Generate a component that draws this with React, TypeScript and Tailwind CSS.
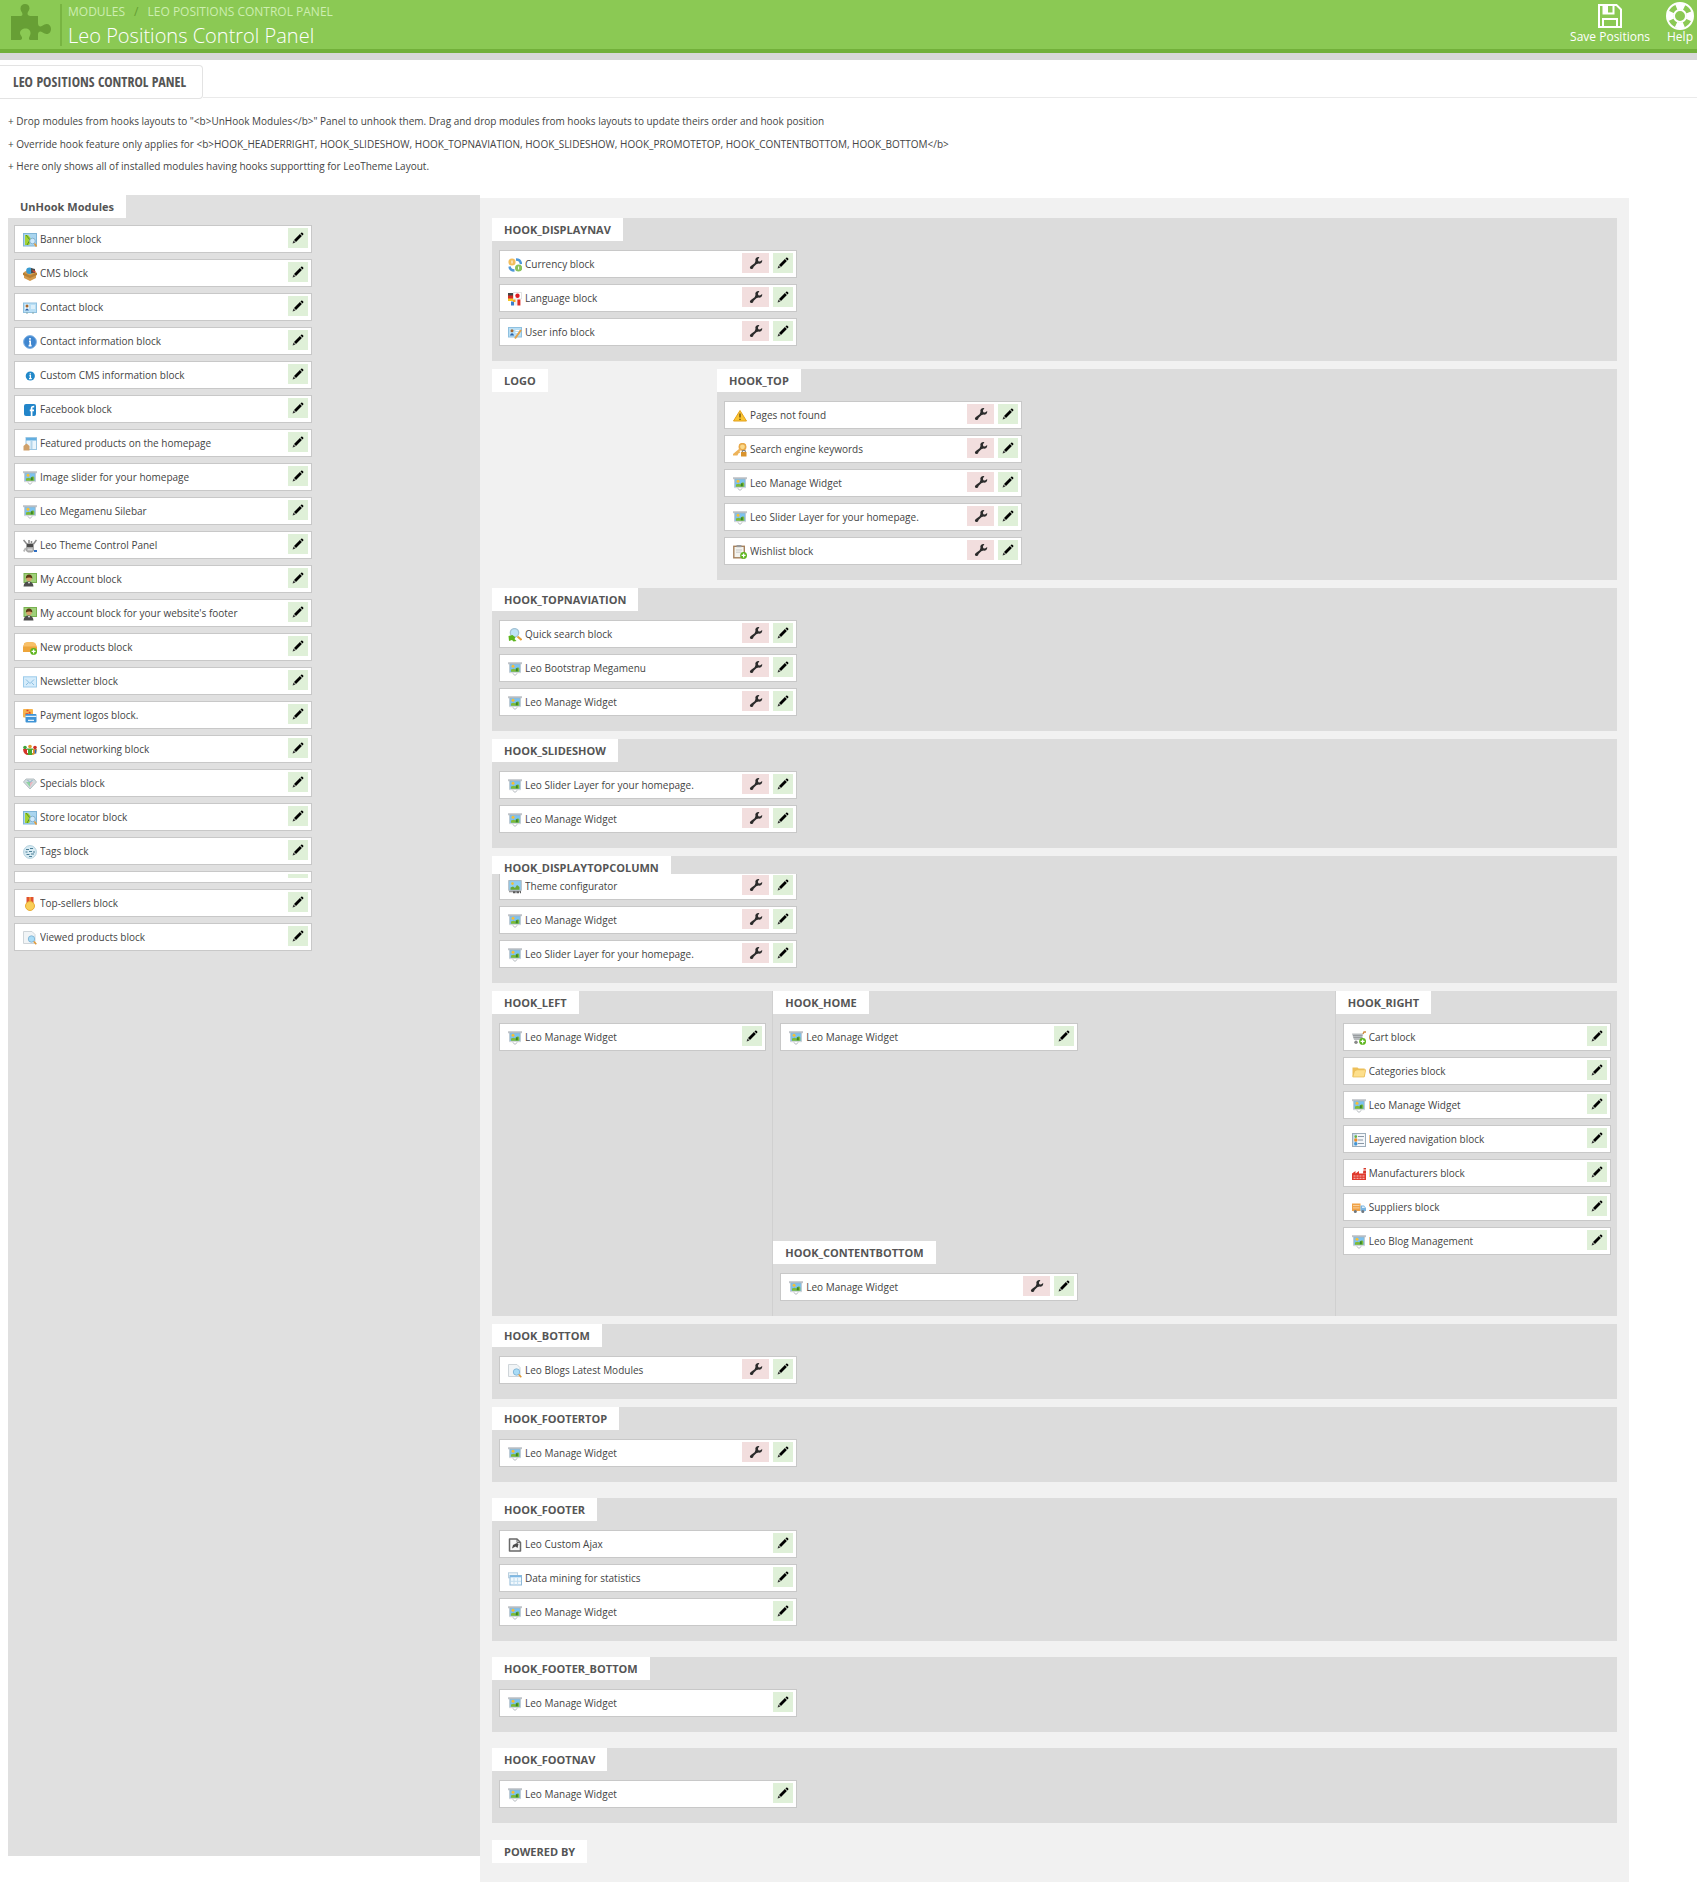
import React from "react";

type IconName =
  | "map" | "box" | "contact" | "info" | "infoSmall" | "facebook" | "featured" | "slide" | "robot"
  | "account" | "newbox" | "mail" | "payment" | "social" | "diamond" | "tags" | "medal" | "viewed"
  | "currency" | "language" | "user" | "warning" | "key" | "wishlist" | "search" | "theme"
  | "cart" | "folder" | "layered" | "factory" | "truck" | "ajax" | "table";

type Module = { name: string; icon: IconName; override?: boolean; state?: "sliver" | "topless" };

const greenPlus = (
  <>
    <circle cx="10.6" cy="10.4" r="3.4" fill="#5cb51c" />
    <path d="M10.6 8.4v4M8.6 10.4h4" stroke="#fff" strokeWidth="1.3" />
  </>
);

const ICONS: Record<IconName, React.ReactNode> = {
  map: (
    <>
      <rect x="0.5" y="0.5" width="13" height="12.5" fill="#a9d5ef" stroke="#7fb4d6" />
      <path d="M2 2h3l4 5-3 5H2z" fill="#a4d233" />
      <path d="M3 2l4 5-3 5" stroke="#4f8f2a" fill="none" />
      <circle cx="9.5" cy="8" r="2.8" fill="#cfe9fa" stroke="#86b3d1" />
      <path d="M11.5 10.5l2 3" stroke="#e39a3b" strokeWidth="1.6" />
    </>
  ),
  box: (
    <>
      <path d="M1 5l6-3 6 3v6l-6 3-6-3z" fill="#d39a4c" />
      <circle cx="6.5" cy="3.8" r="3.3" fill="#3a9bd0" />
      <path d="M8 1l4 1v4H8z" fill="#4b4b4b" />
      <path d="M9 3l4 1-2 2z" fill="#d2452e" />
      <path d="M0 5.5l7 3 7-3v2.5l-7 3-7-3z" fill="#b67f35" />
    </>
  ),
  contact: (
    <>
      <rect x="0.5" y="2" width="13" height="9.5" fill="#b9dff5" stroke="#8fc0df" />
      <rect x="2" y="3.5" width="4" height="6" fill="#eaf5fc" />
      <circle cx="4" cy="5" r="1.5" fill="#a5662e" />
      <path d="M2 9.5q2-4 4 0z" fill="#2b63a8" />
      <path d="M8 5h4M8 7h4" stroke="#fff" />
      <path d="M3 12h2M9 12h2" stroke="#8aa" />
    </>
  ),
  info: (
    <>
      <circle cx="7" cy="7" r="6.4" fill="#3f86cf" stroke="#7fb2e4" />
      <path d="M7 3v1.8M6 6.2h1.2v4.2M5.6 10.6h3" stroke="#fff" strokeWidth="1.6" fill="none" />
    </>
  ),
  infoSmall: (
    <>
      <circle cx="7.3" cy="7" r="4.6" fill="#2188c9" />
      <path d="M7.3 4.2v1.4M6.4 6.6h1v3M6 9.6h2.8" stroke="#fff" strokeWidth="1.3" fill="none" />
    </>
  ),
  facebook: (
    <>
      <rect x="1" y="1" width="12" height="12" rx="2" fill="#2285c9" />
      <path d="M8.6 13V5.2q0-1.8 2.6-1.6M6.8 7.4h4.2" stroke="#fff" strokeWidth="1.7" fill="none" />
    </>
  ),
  featured: (
    <>
      <rect x="3" y="0.5" width="10.5" height="12" fill="#eaf5fc" stroke="#9cc6e2" />
      <path d="M3 1h10.5v2.5H3z" fill="#62aee0" />
      <path d="M8.5 4v8" stroke="#b4d5ea" strokeWidth="2" />
      <path d="M.5 9l3-2.5L6.5 9v4.5h-6z" fill="#cfa06a" />
    </>
  ),
  slide: (
    <>
      <path d="M0 .2h14v2H0z" fill="#c0c4c9" />
      <rect x="1.8" y="2" width="10.4" height="8.4" fill="#7cc2f0" stroke="#a2b3bf" strokeWidth=".8" />
      <circle cx="5" cy="4.2" r="1.5" fill="#f7be35" />
      <path d="M3 9.7V7.6l2.5-.8 2 .8 1.5-2h1.5l.8 1v3.1z" fill="#7fbb35" />
      <path d="M7.8 9.3V6.3h2v3z" fill="#38862d" />
      <path d="M1.5 10.6h11" stroke="#d3d8dc" strokeWidth="1.2" />
      <path d="M4.6 11.3L7 13.4l2.4-2.1" stroke="#b5babf" fill="#fff" />
    </>
  ),
  robot: (
    <>
      <path d="M3 4h8v8l-2 1.5H5L3 12z" fill="#a6a6a6" />
      <path d="M4 5h6v3H4z" fill="#4a4a4a" />
      <path d="M4.5 9.5h5v2h-5z" fill="#d6d6d6" />
      <path d="M.5 1L3.8 5M13.5 1L10.5 5M6 1v3M8.5 2v2" stroke="#8a8a8a" strokeWidth="1.5" />
      <path d="M.8 12.5l2-3.5" stroke="#b8b8b8" strokeWidth="1.8" />
      <path d="M11 12h3" stroke="#2f6fc4" strokeWidth="2" />
    </>
  ),
  account: (
    <>
      <rect x="1" y="0.5" width="12.5" height="9" fill="#9fd07a" stroke="#78b04f" />
      <circle cx="6" cy="5.5" r="2.8" fill="#d8a06a" />
      <path d="M2.8 5.5q0-4 3.2-4t3.4 4Q6 3.5 2.8 5.5z" fill="#5b3714" />
      <path d="M.5 13.5q.5-5 5-5t5 5z" fill="#4d4d4d" />
      <path d="M5 9l1 2 1-2z" fill="#fff" />
    </>
  ),
  newbox: (
    <>
      <path d="M0 6l1.5-4Q7 .2 12 2l2 4v5H0z" fill="#eda53b" />
      <path d="M1.5 2Q7 .2 12 2l1.8 3.5H.3z" fill="#f8c068" />
      {greenPlus}
    </>
  ),
  mail: (
    <>
      <rect x="0.5" y="1.8" width="13" height="10.2" fill="#d5ecfb" stroke="#9ccbea" />
      <path d="M3 4.5l4 4 4-4M3 10l2.5-2.5M11 10L8.5 7.5" stroke="#8cbfe2" fill="none" />
    </>
  ),
  payment: (
    <>
      <rect x="0" y="0" width="10" height="8.5" rx="1" fill="#f6b44d" />
      <path d="M3.5 1.5h2M6 3l1.5 1.5M2.5 5h3" stroke="#e2412f" strokeWidth="1.6" />
      <rect x="2.5" y="5" width="11" height="8.5" rx="1" fill="#3f94d6" />
      <path d="M2.5 7.3h11M5 11.3h6" stroke="#e4f2fb" strokeWidth="1.3" />
    </>
  ),
  social: (
    <>
      <circle cx="7" cy="3.5" r="1.8" fill="#e39a2e" />
      <circle cx="2" cy="4.5" r="1.8" fill="#3ea33a" />
      <circle cx="12" cy="4.5" r="1.8" fill="#cf2c23" />
      <path d="M0 6h4l1.5 6q-5 0-5.5-6z" fill="#d6342a" />
      <path d="M14 6h-4l-1.5 6q5 0 5.5-6z" fill="#e0912c" />
      <path d="M4 5.5h6L9 12H5z" fill="#46a832" />
      <path d="M12.5 6.5v4" stroke="#2a6bbf" strokeWidth="1.6" />
      <path d="M4.500 7v3M9.500 7v3" stroke="#fff" />
    </>
  ),
  diamond: (
    <>
      <path d="M.5 5L3 2h8l2.5 3L7 12z" fill="#cfdadd" stroke="#b6bfc2" />
      <path d="M3 5l4 5V5z" fill="#8fd3a0" />
      <path d="M7 5v5l3-5z" fill="#e9b8c0" />
      <path d="M4.5 3L7 5.5 9.5 3" stroke="#7fa7c4" fill="none" />
    </>
  ),
  tags: (
    <>
      <circle cx="7" cy="7" r="6.4" fill="#d8ebf3" stroke="#b2d0dd" />
      <path d="M3 4.5h3M7 3.5h3M2.5 7h2M6 6.5h3M10 7h2M3.5 9.5h3M8 9h3M6 11.5h3" stroke="#4a7e96" strokeWidth="1.2" />
    </>
  ),
  medal: (
    <>
      <path d="M3.5 0h7v6h-7z" fill="#e0512f" />
      <path d="M6 0h2v5H6z" fill="#f08a3c" />
      <circle cx="7" cy="9" r="4.5" fill="#f9cf58" stroke="#e8ac33" />
    </>
  ),
  viewed: (
    <>
      <path d="M.5.5h8.5l3 3v9H.5z" fill="#f1f4f6" stroke="#cfd5d9" />
      <circle cx="8.5" cy="8" r="3.2" fill="#a9dcf7" stroke="#86b9d8" />
      <path d="M10.8 10.5l2.5 2.7" stroke="#e09a3a" strokeWidth="1.6" />
    </>
  ),
  currency: (
    <>
      <circle cx="4" cy="4" r="3.6" fill="#f2bd5c" />
      <circle cx="10.6" cy="10" r="3.6" fill="#8ac15c" />
      <path d="M8 1.5q4.5 0 5 4.5M6.5 12.5Q2 12.5 1.5 8.5" stroke="#4e98d8" strokeWidth="2.4" fill="none" />
      <path d="M4 2.5v3M10.6 8.5v3" stroke="#fff" />
    </>
  ),
  language: (
    <>
      <path d="M0 1h5v8H0z" fill="#d62b21" />
      <path d="M0 1h5v2.5H0z" fill="#444" />
      <path d="M0 6.5h5V9H0z" fill="#f4c727" />
      <path d="M5.5.5h8v6.5h-8z" fill="#fff" stroke="#cfcfcf" strokeWidth=".6" />
      <circle cx="9.5" cy="3.8" r="2.2" fill="#e01b22" />
      <path d="M3 9.5h3v4H3z" fill="#3a7fcd" />
      <path d="M6 7.5h3.4v6H6z" fill="#f1f1f1" />
      <path d="M9.4 7.5h3v6h-3z" fill="#dd2b25" />
      <path d="M5 7.5h2.5V10H5z" fill="#f4a527" />
    </>
  ),
  user: (
    <>
      <rect x="0.5" y="1.5" width="13" height="9.5" fill="#b9dff5" stroke="#8fc0df" />
      <circle cx="4" cy="4.8" r="1.5" fill="#a5662e" />
      <path d="M1.8 9.5q2.2-4.4 4.4 0z" fill="#2b63a8" />
      <path d="M7.5 4.5h4M7.5 6.5h3" stroke="#fff" />
      <path d="M13 4l-6 8.5" stroke="#e3a24a" strokeWidth="2" />
    </>
  ),
  warning: (
    <>
      <path d="M7 1.5L13.5 12H.5z" fill="#fbc531" stroke="#e3a01d" strokeLinejoin="round" />
      <path d="M7 4.5v4M7 9.7v1.3" stroke="#6d5012" strokeWidth="1.4" />
    </>
  ),
  key: (
    <>
      <circle cx="9.5" cy="3.8" r="3.2" fill="#fbd98a" stroke="#e8a94a" strokeWidth="1.6" />
      <path d="M7.5 6L.8 11.6h3l1-2 2-1" stroke="#edb35a" strokeWidth="2" fill="none" />
      <rect x="8" y="9" width="5.5" height="4.5" fill="#d9932d" />
      <path d="M9.3 9V7.6h3V9" stroke="#777" fill="none" />
    </>
  ),
  wishlist: (
    <>
      <rect x="0.8" y="1.3" width="10.5" height="11.5" fill="#f3f3ee" stroke="#a5815c" strokeWidth="1.4" />
      <rect x="3.5" y="0" width="5" height="2.2" fill="#9a9a9a" />
      <path d="M3 5h6M3 7.2h5" stroke="#c9c9c9" />
      {greenPlus}
    </>
  ),
  search: (
    <>
      <circle cx="6.5" cy="4.8" r="4.2" fill="#bfe3f7" stroke="#a3c2d5" strokeWidth="1.3" />
      <path d="M9.5 8.5l4 3.5" stroke="#e6a23a" strokeWidth="2" />
      <path d="M.5 8l4-1 3 2.5-1 1.5 2 2-3 .5-1.500-1.500L1 13z" fill="#5cb51c" />
    </>
  ),
  theme: (
    <>
      <rect x="0.8" y="0.6" width="12.4" height="9.6" fill="#8fcdf2" stroke="#a6b3bb" />
      <path d="M2.5 9.7V7.5l2.5-1 2 1.5 2-3 2.5 2v2.7z" fill="#6aa833" />
      <circle cx="4.5" cy="3.6" r="1.3" fill="#f5c02f" />
      <path d="M1 11.5h12" stroke="#9a9a9a" strokeWidth="1.6" />
      <path d="M5 12.3h8" stroke="#5c5c5c" strokeWidth="2" strokeDasharray="2.5 1" />
    </>
  ),
  cart: (
    <>
      <path d="M0 2.5h11L9.8 9H2z" fill="#b9bdc0" />
      <path d="M1 4.5h9.5M1.5 6.5h9" stroke="#999da0" />
      <path d="M11 3l1-2h2" stroke="#d08c3f" fill="none" strokeWidth="1.4" />
      <circle cx="4" cy="11.3" r="1.7" fill="#888" />
      {greenPlus}
    </>
  ),
  folder: (
    <>
      <path d="M.5 2.5h5l1.2 1h6v8H.5z" fill="#eec05a" />
      <path d="M2.5 6L5 4.8h8.8l-1.6 7.2H.8z" fill="#fddf8c" stroke="#e7b94f" strokeWidth=".7" />
    </>
  ),
  layered: (
    <>
      <rect x="0.5" y="0.5" width="13" height="13" fill="#f4f7fa" stroke="#9dadba" />
      <path d="M1 1h4v12H1z" fill="#c9dcea" />
      <path d="M6 3.5h6M6 7h5M6 10.5h6" stroke="#8a98a5" />
      <circle cx="3.8" cy="3.6" r="1.3" fill="#65b33a" />
      <circle cx="3.8" cy="7" r="1.7" fill="#ef8e28" />
      <circle cx="3.8" cy="10.8" r="1.7" fill="#4194d4" />
    </>
  ),
  factory: (
    <>
      <path d="M0 6.5L3.5 4v2.5L7 4v2.5h7v6.5H0z" fill="#e0392c" />
      <path d="M11 6.5h3V1h-2.4z" fill="#d8382b" />
      <path d="M1.5 9h11M1.5 11.3h11" stroke="#f9c2bd" strokeDasharray="2 1" />
      <path d="M11 3h3" stroke="#fff" />
    </>
  ),
  truck: (
    <>
      <rect x="0" y="2.5" width="8.5" height="7.5" fill="#f0a247" />
      <path d="M1 4.5h6.5M1 6.9h6.5" stroke="#f9cf9a" />
      <path d="M8.5 4.5H12l2 2.5v3H8.5z" fill="#7ab5e2" />
      <path d="M10 5.5h2l1 1.6h-3z" fill="#dff0fb" />
      <circle cx="3.3" cy="10.5" r="1.5" fill="#6d7780" />
      <circle cx="10.8" cy="10.5" r="1.5" fill="#6d7780" />
    </>
  ),
  ajax: (
    <>
      <path d="M1.5 1h7.5l3.5 3.5V13h-11z" fill="#f6f6f6" stroke="#6a6a6a" strokeWidth="1.5" strokeLinejoin="round" />
      <path d="M9 1v3.5h3.5" stroke="#6a6a6a" fill="none" />
      <path d="M4 10.5l1-3.5 4-2 1.5 1-1 4-2-1.5z" fill="#4a4a4a" />
    </>
  ),
  table: (
    <>
      <rect x="0.5" y="0.8" width="9" height="5" fill="#eef5fa" stroke="#b9cfdf" />
      <rect x="2" y="3.5" width="11.5" height="9.5" fill="#f1f8fd" stroke="#8fb9d8" />
      <path d="M2 4.5h11.5" stroke="#7cb8e6" strokeWidth="1.6" />
      <path d="M6 6v7M9.6 6v7M3 9.3h10" stroke="#c3deef" />
    </>
  ),
};

function ModuleIcon({ name }: { name: IconName }) {
  return (
    <svg viewBox="0 0 14 14" className="mt-[5px] size-3.5 shrink-0" aria-hidden="true">
      {ICONS[name]}
    </svg>
  );
}

function Pencil() {
  return (
    <svg viewBox="0 0 12 12" className="size-3" aria-hidden="true">
      <path d="M.6 11.4l.9-2.9 2 2z" fill="#333" />
      <path d="M2 8L7.900 2.100l2 2L4 10z" fill="#000" />
      <path d="M8.500 1.500l.7-.7q.6-.5 1.200 0l.8.8q.5.600 0 1.200l-.7.700z" fill="#000" />
    </svg>
  );
}

function Wrench() {
  return (
    <svg viewBox="0 0 14 14" className="size-3.5" aria-hidden="true">
      <path
        d="M10.400 1Q8 .7 6.800 2.300 6 3.600 6.500 5.100L5.600 7.200 2.200 9.700Q.300 10.700 1 12.300 2 13.700 3.600 12.700 4.400 12 4.500 11L7.300 8.300 9.400 7.600Q11 7.900 12.300 6.900 13.500 5.800 13.200 4L11 5.600 9.300 5.200 8.900 3.500z"
        fill="#2b2b2b"
      />
    </svg>
  );
}

function ModuleCard({ module }: { module: Module }) {
  if (module.state === "sliver") {
    return (
      <li className="flex h-3 max-w-[298px] justify-end border border-[#c8c8c8] bg-white px-[3px] py-0.5">
        <span className="h-1 w-5 bg-[#dff0d8]" />
      </li>
    );
  }
  const box =
    module.state === "topless"
      ? "flex h-[26px] max-w-[298px] items-start border border-t-0 border-[#c8c8c8] bg-white pt-px pr-[3px] pl-2"
      : "flex h-7 max-w-[298px] items-start border border-[#c8c8c8] bg-white pt-0.5 pr-[3px] pl-2";
  return (
    <li className={box}>
      <ModuleIcon name={module.icon} />
      <span className="ml-[3px] flex-1 truncate text-[10px] leading-[22px]">{module.name}</span>
      {module.override && (
        <button type="button" aria-label={`Override hook of ${module.name}`} className="mr-1 flex h-5 w-[27px] items-center justify-center bg-[#f2dede]">
          <Wrench />
        </button>
      )}
      <button type="button" aria-label={`Edit ${module.name}`} className="flex size-5 items-center justify-center bg-[#dff0d8]">
        <Pencil />
      </button>
    </li>
  );
}

function HookLabel({ children }: { children: React.ReactNode }) {
  return (
    <h2 className="h-[23px] w-fit bg-white px-3 text-[11px] leading-6 font-bold text-[#555]">{children}</h2>
  );
}

function Hook({ title, modules }: { title: string; modules: Module[] }) {
  return (
    <section>
      <HookLabel>{title}</HookLabel>
      <ul className="flex flex-col gap-1.5 pt-[9px] pr-1.5 pb-[15px] pl-[7px]">
        {modules.map((m, i) => (
          <ModuleCard key={i} module={m} />
        ))}
      </ul>
    </section>
  );
}

const widget: Module = { name: "Leo Manage Widget", icon: "slide" };
const widgetO: Module = { ...widget, override: true };
const sliderO: Module = { name: "Leo Slider Layer for your homepage.", icon: "slide", override: true };

const UNHOOKED: Module[] = [
  { name: "Banner block", icon: "map" },
  { name: "CMS block", icon: "box" },
  { name: "Contact block", icon: "contact" },
  { name: "Contact information block", icon: "info" },
  { name: "Custom CMS information block", icon: "infoSmall" },
  { name: "Facebook block", icon: "facebook" },
  { name: "Featured products on the homepage", icon: "featured" },
  { name: "Image slider for your homepage", icon: "slide" },
  { name: "Leo Megamenu Silebar", icon: "slide" },
  { name: "Leo Theme Control Panel", icon: "robot" },
  { name: "My Account block", icon: "account" },
  { name: "My account block for your website's footer", icon: "account" },
  { name: "New products block", icon: "newbox" },
  { name: "Newsletter block", icon: "mail" },
  { name: "Payment logos block.", icon: "payment" },
  { name: "Social networking block", icon: "social" },
  { name: "Specials block", icon: "diamond" },
  { name: "Store locator block", icon: "map" },
  { name: "Tags block", icon: "tags" },
  { name: "", icon: "tags", state: "sliver" },
  { name: "Top-sellers block", icon: "medal" },
  { name: "Viewed products block", icon: "viewed" },
];

const DISPLAY_NAV: Module[] = [
  { name: "Currency block", icon: "currency", override: true },
  { name: "Language block", icon: "language", override: true },
  { name: "User info block", icon: "user", override: true },
];
const TOP: Module[] = [
  { name: "Pages not found", icon: "warning", override: true },
  { name: "Search engine keywords", icon: "key", override: true },
  widgetO,
  sliderO,
  { name: "Wishlist block", icon: "wishlist", override: true },
];
const TOP_NAV: Module[] = [
  { name: "Quick search block", icon: "search", override: true },
  { name: "Leo Bootstrap Megamenu", icon: "slide", override: true },
  widgetO,
];
const TOP_COLUMN: Module[] = [
  { name: "Theme configurator", icon: "theme", override: true, state: "topless" },
  widgetO,
  sliderO,
];
const RIGHT: Module[] = [
  { name: "Cart block", icon: "cart" },
  { name: "Categories block", icon: "folder" },
  widget,
  { name: "Layered navigation block", icon: "layered" },
  { name: "Manufacturers block", icon: "factory" },
  { name: "Suppliers block", icon: "truck" },
  { name: "Leo Blog Management", icon: "slide" },
];
const FOOTER: Module[] = [
  { name: "Leo Custom Ajax", icon: "ajax" },
  { name: "Data mining for statistics", icon: "table" },
  widget,
];

function Header() {
  return (
    <header className="flex h-[60px] items-start border-b-[7px] border-[#d8d8d8] bg-[#8bc954]">
      <div className="flex h-[53px] w-full items-start border-b-4 border-[#72b03a] text-white">
        <div className="mt-1 flex h-[42px] w-[62px] items-start border-r-2 border-[#78b442] pl-[11px]">
          <svg viewBox="0 0 40 36" className="h-9 w-10" aria-hidden="true">
            <path
              d="M0 12h9.500c2 0 2.500-1.500 1.500-3.500-1-1.500-1.500-2.500-1.500-4C9.500 1.500 11.500 0 14 0s4.500 1.500 4.500 4.200c0 2-2 3.300-2 5.300 0 1.500 1 2.500 3 2.500H27v7c0 2.500 1 3.500 2.500 3.500 2 0 3-2.500 6-2.500 2.800 0 4.500 2 4.500 5s-2 5-4.500 5c-3 0-4-2.500-6-2.500-1.500 0-2.500 1-2.500 3V36h-7.500c-1.500 0-2-1-1.200-3 .8-1.500 1.200-2.500 1.200-4 0-2.500-2-4.500-5-4.500s-5.500 2-5.500 4.500c0 2 1.500 2.500 2 4.500.3 1.500-.5 2.500-2 2.500H0z"
              fill="#679f35"
            />
          </svg>
        </div>
        <div className="flex-1 pl-1.5">
          <nav aria-label="Breadcrumb" className="flex h-6 items-center text-[12px] leading-6 text-[#cdeeb0]">
            <a href="#modules">MODULES</a>
            <span className="px-[9px] text-[#649e33]">/</span>
            <a href="#panel">LEO POSITIONS CONTROL PANEL</a>
          </nav>
          <h1 className="text-[20px] leading-6 font-light">Leo Positions Control Panel</h1>
        </div>
        <button type="button" className="mr-4 flex flex-col items-center pt-0.5 text-[12px] leading-[14px]">
          <svg viewBox="0 0 26 28" className="h-7 w-[26px]" aria-hidden="true" fill="none" stroke="#fff" strokeWidth="2">
            <path d="M2 3h17.500L24 7.500V25H2z" />
            <path d="M6 25v-8h14v8M6.500 3v8.500h10V3" />
            <path d="M6.500 3h4.500v8H6.500z" fill="#fff" stroke="none" />
          </svg>
          Save Positions
        </button>
        <button type="button" className="mr-[3px] flex flex-col items-center pt-0.5 text-[12px] leading-[14px]">
          <svg viewBox="0 0 28 28" className="size-7" aria-hidden="true" fill="none" stroke="#fff">
            <circle cx="14" cy="14" r="13" strokeWidth="2" />
            <circle cx="14" cy="14" r="6" strokeWidth="2" />
            <circle cx="14" cy="14" r="9.500" strokeWidth="6" strokeDasharray="8 6.923" strokeDashoffset="4" />
          </svg>
          Help
        </button>
      </div>
    </header>
  );
}

export default function App() {
  return (
    <div className="min-h-screen bg-white font-['Open_Sans',sans-serif] text-[#444]">
      <Header />
      <div className="mt-[5px] flex h-[34px] items-start">
        <h2 className="h-[34px] rounded-r border border-l-0 border-[#e3e3e3] bg-white pr-4 pl-[13px] font-['Liberation_Sans_Narrow','Open_Sans_Condensed',sans-serif] text-[14px] leading-8 text-[#555]">
          LEO POSITIONS CONTROL PANEL
        </h2>
        <div className="h-[33px] flex-1 border-b border-[#eaeaea]" />
      </div>

      <div className="px-2 pt-[11px] text-[10px] leading-[22px]">
        <p>+ Drop modules from hooks layouts to "&lt;b&gt;UnHook Modules&lt;/b&gt;" Panel to unhook them. Drag and drop modules from hooks layouts to update theirs order and hook position</p>
        <p className="mt-px">+ Override hook feature only applies for &lt;b&gt;HOOK_HEADERRIGHT, HOOK_SLIDESHOW, HOOK_TOPNAVIATION, HOOK_SLIDESHOW, HOOK_PROMOTETOP, HOOK_CONTENTBOTTOM, HOOK_BOTTOM&lt;/b&gt;</p>
        <p>+ Here only shows all of installed modules having hooks supportting for LeoTheme Layout.</p>
      </div>

      <div className="mt-[18px] flex items-start pr-[68px] pl-2">
        <aside className="min-h-[1661px] w-[472px] shrink-0 bg-[#e0e0e0]">
          <HookLabel>UnHook Modules</HookLabel>
          <ul className="flex flex-col gap-1.5 px-1.5 pt-[7px]">
            {UNHOOKED.map((m, i) => (
              <ModuleCard key={i} module={m} />
            ))}
          </ul>
        </aside>

        <main className="mt-[3px] flex min-w-0 flex-1 flex-col gap-2 bg-[#f1f1f1] px-3 pt-5 pb-[19px]">
          <div className="bg-[#dcdcdc]"><Hook title="HOOK_DISPLAYNAV" modules={DISPLAY_NAV} /></div>
          <div className="grid grid-cols-5">
            <HookLabel>LOGO</HookLabel>
            <div className="col-span-4 bg-[#dcdcdc]"><Hook title="HOOK_TOP" modules={TOP} /></div>
          </div>
          <div className="bg-[#dcdcdc]"><Hook title="HOOK_TOPNAVIATION" modules={TOP_NAV} /></div>
          <div className="bg-[#dcdcdc]"><Hook title="HOOK_SLIDESHOW" modules={[sliderO, widgetO]} /></div>
          <section className="bg-[#dcdcdc]">
            <h2 className="h-[18px] w-fit bg-white px-3 text-[11px] leading-[23px] font-bold text-[#555]">HOOK_DISPLAYTOPCOLUMN</h2>
            <ul className="flex flex-col gap-1.5 pr-1.5 pb-[15px] pl-[7px]">
              {TOP_COLUMN.map((m, i) => (
                <ModuleCard key={i} module={m} />
              ))}
            </ul>
          </section>
          <div className="grid grid-cols-4 bg-[#dcdcdc]">
            <div className="border-r border-[#d0d0d0]"><Hook title="HOOK_LEFT" modules={[widget]} /></div>
            <div className="col-span-2 border-r border-[#d0d0d0]">
              <div className="min-h-[250px]"><Hook title="HOOK_HOME" modules={[widget]} /></div>
              <Hook title="HOOK_CONTENTBOTTOM" modules={[widgetO]} />
            </div>
            <Hook title="HOOK_RIGHT" modules={RIGHT} />
          </div>
          <div className="bg-[#dcdcdc]"><Hook title="HOOK_BOTTOM" modules={[{ name: "Leo Blogs Latest Modules", icon: "viewed", override: true }]} /></div>
          <div className="bg-[#dcdcdc]"><Hook title="HOOK_FOOTERTOP" modules={[widgetO]} /></div>
          <div className="mt-2 bg-[#dcdcdc]"><Hook title="HOOK_FOOTER" modules={FOOTER} /></div>
          <div className="mt-2 bg-[#dcdcdc]"><Hook title="HOOK_FOOTER_BOTTOM" modules={[widget]} /></div>
          <div className="mt-2 bg-[#dcdcdc]"><Hook title="HOOK_FOOTNAV" modules={[widget]} /></div>
          <div className="mt-[9px]"><HookLabel>POWERED BY</HookLabel></div>
        </main>
      </div>
    </div>
  );
}
